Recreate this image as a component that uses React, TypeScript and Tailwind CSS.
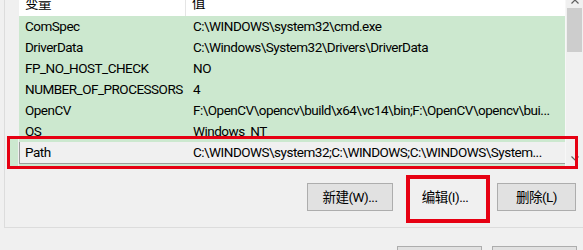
const rows = [
  { name: "ComSpec", value: "C:\\WINDOWS\\system32\\cmd.exe" },
  { name: "DriverData", value: "C:\\Windows\\System32\\Drivers\\DriverData" },
  { name: "FP_NO_HOST_CHECK", value: "NO" },
  { name: "NUMBER_OF_PROCESSORS", value: "4" },
  { name: "OpenCV", value: "F:\\OpenCV\\opencv\\build\\x64\\vc14\\bin;F:\\OpenCV\\opencv\\bui..." },
  { name: "OS", value: "Windows_NT" },
];

const Chevron = ({ down }: { down?: boolean }) => (
  <svg width="8" height="5" viewBox="0 0 8 5" className="block">
    <path
      d={down ? "M0.5 0.5 L4 4 L7.5 0.5" : "M0.5 4.5 L4 1 L7.5 4.5"}
      fill="none"
      stroke="#606060"
      strokeWidth="1.2"
    />
  </svg>
);

const App = () => {
  return (
    <div className="relative w-[583px] h-[250px] overflow-hidden bg-[#f0f0f0] text-[13.5px] tracking-[-0.5px] text-black font-['Roboto','Noto_Sans_CJK_SC',sans-serif]">
      {/* group box */}
      <div className="ml-[4px] h-[228px] border-l border-b border-[#dcdcdc] pl-[14px]">
        {/* list view */}
        <div className="flex h-[166px]">
          <div className="w-[546px] flex flex-col bg-[#cce8cf]">
            <div className="flex h-[16px] shrink-0 overflow-hidden bg-white">
              <div className="w-[167px] border-r border-[#e5e5e5] pl-[6px]">
                <div className="-mt-[7px] leading-[21px]">变量</div>
              </div>
              <div className="flex-1 pl-[6px]">
                <div className="-mt-[7px] leading-[21px]">值</div>
              </div>
            </div>
            {rows.map((r) => (
              <div key={r.name} className="flex h-[21px] shrink-0 items-center leading-[21px]">
                <div className="w-[168px] pl-[6px] whitespace-nowrap overflow-hidden">{r.name}</div>
                <div className="flex-1 pl-[6px] whitespace-nowrap overflow-hidden">{r.value}</div>
              </div>
            ))}
            <div className="flex h-[22px] shrink-0 items-center leading-[21px] bg-[#f0f0f0] border-l border-b border-[#9c9c9c]">
              <div className="w-[167px] pl-[5px] whitespace-nowrap">Path</div>
              <div className="flex-1 pl-[6px] whitespace-nowrap overflow-hidden">
                C:\WINDOWS\system32;C:\WINDOWS;C:\WINDOWS\System...
              </div>
            </div>
          </div>
          {/* scrollbar */}
          <div className="w-[18px] flex flex-col items-center bg-[#f0f0f0] border-l border-[#f7f7f7]">
            <div className="h-[9px] flex items-start -mt-[1px]">
              <Chevron />
            </div>
            <div className="w-[15px] h-[44px] bg-[#cdcdcd]" />
            <div className="flex-1" />
            <div className="h-[11px] pt-[1px]">
              <Chevron down />
            </div>
          </div>
        </div>
        {/* buttons */}
        <div className="mt-[17px] flex justify-end pr-[7px] gap-[9px]">
          <button className="w-[86px] h-[28px] border border-[#adadad] bg-[#e1e1e1]">新建(W)...</button>
          <div className="w-[86px] h-[28px] flex items-center justify-center">编辑(I)...</div>
          <button className="w-[79px] h-[28px] border border-[#adadad] bg-[#e1e1e1]">删除(L)</button>
        </div>
      </div>
      {/* dialog buttons */}
      <div className="mt-[18px] flex justify-end pr-[6px] gap-[10px]">
        <button className="w-[85px] h-[28px] border border-[#adadad] bg-[#e1e1e1]">确定</button>
        <button className="w-[85px] h-[28px] border border-[#adadad] bg-[#e1e1e1]">取消</button>
      </div>

      {/* annotation boxes */}
      <div className="absolute left-[7px] top-[136px] w-[571px] h-[33px] border-[3px] border-[#e60012]">
        <div className="w-[8px] h-[27px] bg-[#cce8cf]" />
      </div>
      <div className="absolute left-[406px] top-[175px] w-[84px] h-[48px] border-[4px] border-[#e60012]" />
    </div>
  );
};

export default App;
